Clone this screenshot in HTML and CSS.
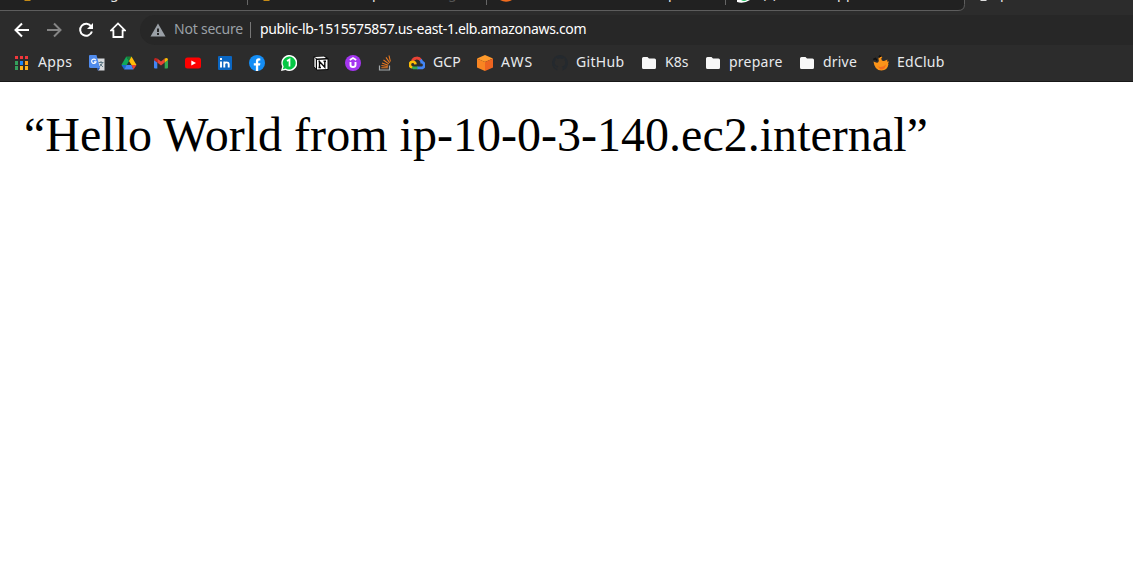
FILE: index.html
```
<!DOCTYPE html>
<html lang="en">
<head>
<meta charset="utf-8">
<title>public-lb</title>
<link rel="stylesheet" href="styles.css">
</head>
<body>
<header class="chrome">
  <svg class="tabs" width="1133" height="15" viewBox="0 0 1133 15">
    <path d="M0 0H964.5V4.5Q964.5 10.5 958 10.5H0Z" fill="#212121"/>
    <path d="M964.5 0V4.5Q964.5 10.5 958 10.5H0" fill="none" stroke="#5d5d5d"/>
    <path d="M247.5 0V5M486.5 0V5M725.5 0V5" stroke="#666"/>
    <path d="M24 0H31L30 1H25ZM263 0H270L269 1H264Z" fill="#c58b16"/>
    <path d="M500 0H512Q506 3.5 500 0Z" fill="#f16c1e"/>
    <path d="M737 0H750Q744 4 737 2Z" fill="#fff"/><path d="M741 0H747Q744 2 741 0Z" fill="#25c365"/>
    <path d="M980 0H987L986 1H981Z" fill="#ddd"/>
    <g class="tab-title" fill="#e4e4e4">
      <text x="110" y="-2">g</text><text x="372" y="-2">p</text><text x="448" y="-2" fill="#555">g</text>
      <text x="668" y="-2">p</text><text x="762" y="-2">(</text><text x="773" y="-2">)</text>
      <text x="837" y="-2">p</text><text x="846" y="-2">p</text><text x="1000" y="-2">p</text>
    </g>
  </svg>
  <nav class="toolbar">
    <svg class="nav" width="16" height="16" viewBox="0 0 16 16"><path d="M15 8H2M8 1.5L1.5 8L8 14.5" stroke="#fff"/></svg>
    <svg class="nav" width="16" height="16" viewBox="0 0 16 16"><path d="M1 8H14M8 1.5L14.5 8L8 14.5" stroke="#858585"/></svg>
    <svg class="nav" width="16" height="16" viewBox="0 0 16 16"><path d="M13.2 4.5A6 6 0 1 0 13.9 9.5" stroke="#fff"/><path d="M15 1V7H9Z" fill="#fff"/></svg>
    <svg class="nav" width="16" height="16" viewBox="0 0 16 16"><path d="M1 8.4H3.4V15H12.6V8.4H15L8 1.4Z" stroke="#fff" stroke-width="1.8"/></svg>
    <div class="address">
      <svg width="16" height="14" viewBox="0 0 16 14"><path d="M8 0.5L15.5 13.5H.5Z" fill="#9aa0a6"/><path d="M8 5.5V9M8 10V12" stroke="#272727" stroke-width="2"/></svg>
      <span class="insecure">Not secure</span>
      <span class="divider"></span>
      <span class="url">public-lb-1515575857.us-east-1.elb.amazonaws.com</span>
    </div>
  </nav>
  <nav class="bookmarks">
    <a class="bm"><svg width="16" height="16" viewBox="0 0 16 16"><path d="M2 1h3v3H2zM7 1h3v3H7zM12 1h3v3h-3z" fill="#f0383c"/><path d="M2 6h3v4H2z" fill="#34a05c"/><path d="M7 6h3v4H7z" fill="#1d87f5"/><path d="M12 6h3v4h-3z" fill="#ffa316"/><path d="M2 11h3v4H2z" fill="#34a05c"/><path d="M7 11h3v4H7zM12 11h3v4h-3z" fill="#fbb31c"/></svg><span class="t-apps">Apps</span></a>
    <a class="bm"><svg width="16" height="16" viewBox="0 0 16 16"><path d="M6 3.500H15.500V15.500H9Z" fill="#d8dadd"/><path d="M9.500 7.500H14.500M12 6V7.500M13.500 7.500Q13 10 10 12M11 9L14 12" stroke="#607985" fill="none"/><path d="M8 13H11L9 16Z" fill="#2856b3"/><path d="M1 0H7.500L11 13H1.500Q0 13 0 11.500V1Q0 0 1 0Z" fill="#508bed"/><path d="M6.800 5.200A2.200 2.200 0 1 0 7 6.800H5" stroke="#fff" fill="none" stroke-width="1.200"/></svg></a>
    <a class="bm"><svg width="16" height="16" viewBox="0 0 16 16"><path d="M5.300 1.500L8 6L3.500 14L.500 9.800Z" fill="#11a85a"/><path d="M5.300 1.500H10.500L8 6Z" fill="#188038"/><path d="M10.500 1.500L15.500 10H10.500L8 6Z" fill="#ffbd08"/><path d="M.5 10H5.500L3.200 14.500Z" fill="#1967d2"/><path d="M5.500 10H10.500L12.500 14.500H3.200Z" fill="#4285f4"/><path d="M10.500 10H15.500L12.500 14.500Z" fill="#ea4335"/></svg></a>
    <a class="bm"><svg width="16" height="16" viewBox="0 0 16 16"><path d="M1 5L4.300 7.500V13.500H2Q1 13.500 1 12.500Z" fill="#4285f4"/><path d="M11.700 7.500L15 5V12.500Q15 13.500 14 13.500H11.700Z" fill="#34a853"/><path d="M4.300 3.500L8 6.500L11.700 3.500V7.500L8 10.500L4.300 7.500Z" fill="#ea4335"/><path d="M1 5Q1 2 4.300 3.500V7.500L1 5Z" fill="#c5221f"/><path d="M11.700 3.500Q15 2 15 5L11.700 7.500Z" fill="#fbbc04"/></svg></a>
    <a class="bm"><svg width="16" height="16" viewBox="0 0 16 16"><rect y="2.500" width="16" height="11" rx="2.500" fill="#f00"/><path d="M6.300 5.500V10.500L11 8Z" fill="#fff"/></svg></a>
    <a class="bm"><svg width="16" height="16" viewBox="0 0 16 16"><rect x="1" y="1" width="14" height="14" rx="1" fill="#0a66c2"/><path d="M4 6.500V12.500M4 3V5M7.300 12.500V6.500M7.300 9Q8 7.300 9.700 7.400Q11.700 7.400 11.700 9.500V12.500" stroke="#fff" stroke-width="1.900" fill="none"/></svg></a>
    <a class="bm"><svg width="16" height="16" viewBox="0 0 16 16"><circle cx="8" cy="8" r="8" fill="#148df5"/><path d="M6.900 16V10.500H4.800V8.200H6.900V6.300Q6.900 3.200 9.800 3.200L11.300 3.400V5.400H10.300Q9.200 5.400 9.200 6.600V8.200H11.400L11 10.500H9.200V16Z" fill="#fff"/></svg></a>
    <a class="bm"><svg width="16" height="16" viewBox="0 0 16 16"><path d="M0 16L1.200 11.600A8 8 0 1 1 4.500 15Z" fill="#fff"/><path d="M1.800 14.300L2.700 11.500A6.500 6.500 0 1 1 4.700 13.500Z" fill="#05c744"/><path d="M6 6L8.500 4.500V11.500" stroke="#fff" stroke-width="1.700" fill="none"/></svg></a>
    <a class="bm"><svg width="16" height="16" viewBox="0 0 16 16"><path d="M.5 1.500L11.500.700L15.500 3.500V15L4 15.500L.700 12Z" fill="#080808"/><path d="M1.500 2L11 1.500L13 3L4 3.600ZM4 5L14.500 4.400V14L4 14.600Z" fill="#fff"/><path d="M1.400 2.500V11.500L2.800 13.500V4Z" fill="#fff"/><path d="M6.500 12.500V6.500L11.800 12.300V6.200M5.500 6.500H7M5.500 12.500H8M10.500 6.200H13" stroke="#080808" stroke-width="1.400" fill="none"/></svg></a>
    <a class="bm"><svg width="16" height="16" viewBox="0 0 16 16"><circle cx="8" cy="8" r="8" fill="#a435f0"/><path d="M5.500 7V10Q5.500 12 8 12T10.500 10V7" stroke="#fff" stroke-width="1.900" fill="none"/><path d="M4.800 5L8 3L11.200 5" stroke="#fff" stroke-width="1.500" fill="none"/></svg></a>
    <a class="bm"><svg width="16" height="16" viewBox="0 0 16 16"><path d="M2.500 10.500V15H12.500V10.500" stroke="#a4a9ac" stroke-width="1.200" fill="none"/><path d="M4.300 12.800H10.800M4.400 10.500L10.800 11.500M5 7.900L11.200 10.200M6.500 5L11.800 8.900M9 2.400L12.700 7.700M12 .5L13.400 6.500" stroke="#e87922" stroke-width="1.100"/></svg></a>
    <a class="bm"><svg width="16" height="16" viewBox="0 0 16 16"><path d="M3.300 6A5 5 0 0 1 12 5.200" stroke="#ea4335" stroke-width="2.800" fill="none"/><path d="M11.500 4.700Q12.800 6 12.800 7.200A2.800 2.800 0 0 1 12 12.900H8" stroke="#4285f4" stroke-width="2.800" fill="none"/><path d="M8.500 12.900H4.500L3 12" stroke="#34a853" stroke-width="2.600" fill="none"/><path d="M3.200 12.300A2.800 2.800 0 1 1 6.500 9.300" stroke="#fbbc05" stroke-width="2.600" fill="none"/></svg><span class="t-gcp">GCP</span></a>
    <a class="bm"><svg width="16" height="16" viewBox="0 0 16 16"><path d="M8 0L16 3.500L8 7L0 3.500Z" fill="#ff9a2b"/><path d="M0 3.500L8 7V16L0 12.500Z" fill="#f98522"/><path d="M16 3.500L8 7V16L16 12.500Z" fill="#ed6420"/></svg><span class="t-aws">AWS</span></a>
    <a class="bm"><svg width="16" height="16" viewBox="0 0 16 16"><path d="M8 0A8 8 0 0 0 5.500 15.600V13.500Q3.500 13.800 2.800 12L1.900 11Q3.400 10.700 4.100 12Q5 12.800 5.700 12.400L6.200 11.300Q2.600 11 2.700 7.400Q2.700 6 3.500 5.200Q3.200 4.200 3.600 3.100Q4.600 3 5.800 3.900Q8 3.300 10.200 3.900Q11.600 3 12.400 3.100Q12.900 4.300 12.500 5.200Q13.300 6 13.300 7.400Q13.300 10.900 9.800 11.300Q10.500 12 10.500 13V15.600A8 8 0 0 0 8 0Z" fill="#24292e"/></svg><span class="t-git">GitHub</span></a>
    <a class="bm"><svg width="16" height="16" viewBox="0 0 16 16"><path class="folder" d="M2.500 2H6.500L8 3.500H13.500Q15 3.500 15 5V12.500Q15 14 13.500 14H2.500Q1 14 1 12.500V3.500Q1 2 2.500 2Z"/></svg><span class="t-k8s">K8s</span></a>
    <a class="bm"><svg width="16" height="16" viewBox="0 0 16 16"><path class="folder" d="M2.500 2H6.500L8 3.500H13.500Q15 3.500 15 5V12.500Q15 14 13.500 14H2.500Q1 14 1 12.500V3.500Q1 2 2.500 2Z"/></svg><span class="t-prepare">prepare</span></a>
    <a class="bm"><svg width="16" height="16" viewBox="0 0 16 16"><path class="folder" d="M2.500 2H6.500L8 3.500H13.500Q15 3.500 15 5V12.500Q15 14 13.500 14H2.500Q1 14 1 12.500V3.500Q1 2 2.500 2Z"/></svg><span class="t-drive">drive</span></a>
    <a class="bm"><svg width="16" height="16" viewBox="0 0 16 16"><path d="M.5 6.500Q3 8 5 7.500Q6.500 6.500 5.500 4Q5.500 1 8 .5L9.300 2.500L8.200 3.500Q8.500 6.500 11 6L14.500 4.500L14 6.500L16 6.500L15 8.500L15.500 9Q14.500 15.500 8.500 15.500Q1.500 15.500 .5 6.500Z" fill="#fb9419"/><path d="M4 10.500Q8 14 13 9.500Q12 15 7.500 14.500Z" fill="#f46d1e"/><path d="M.3 4.500L2.500 3.500L4 5.500M5.800 2.500L7 .8L8.500 1.500" stroke="#111" stroke-width="1.500" fill="none"/></svg><span class="t-ed">EdClub</span></a>
  </nav>
</header>
<main class="page">“Hello World from ip-10-0-3-140.ec2.internal”</main>
</body>
</html>
```
FILE: styles.css
```
body { margin: 0; background: #fff; overflow: hidden; }
.chrome { height: 82px; box-sizing: border-box; background: #2c2c2c; border-bottom: 1px solid #171717; font-family: "Noto Sans", "Open Sans", sans-serif; }
svg { display: block; flex: none; }
.tab-title { font-size: 14px; }
.toolbar { display: flex; align-items: center; height: 30px; padding-left: 14px; gap: 16px; }
.nav { fill: none; stroke-width: 2; }
.address { flex: 1; display: flex; align-items: center; height: 30px; margin-left: -2px; padding-left: 10px; background: #272727; border-radius: 15px 0 0 15px; font-size: 14px; white-space: nowrap; }
.address span { line-height: 18px; padding-bottom: 2px; }
.insecure { width: 68px; margin-left: 8px; color: #9aa0a6; letter-spacing: -.22px; }
.address .divider { width: 1px; height: 16px; padding: 0; margin: 0 9px 0 8px; background: #777; }
.url { color: #fff; letter-spacing: -.34px; }
.bookmarks { display: flex; align-items: center; height: 36px; padding-left: 13px; gap: 16px; font-size: 14px; line-height: 18px; color: #e8eaed; white-space: nowrap; }
.bm { display: flex; align-items: center; gap: 8px; height: 20px; }
.bm span { padding-bottom: 2px; }
.t-apps { width: 35px; margin-left: 1px; letter-spacing: .4px; }
.t-gcp { width: 28px; letter-spacing: .1px; }
.t-aws { width: 35px; letter-spacing: 1.1px; }
.t-git { width: 49px; letter-spacing: .3px; }
.t-k8s { width: 24px; }
.t-prepare { width: 54px; letter-spacing: .25px; }
.t-drive { width: 34px; letter-spacing: .2px; }
.t-ed { width: 48px; letter-spacing: .25px; }
.bookmarks { box-sizing: border-box; padding-bottom: 1px; }
.folder { fill: #f7f7f7; }
.page { padding: 25px 24px; font: 48px/55px "Liberation Serif", serif; letter-spacing: .02px; color: #000; white-space: nowrap; }
```
